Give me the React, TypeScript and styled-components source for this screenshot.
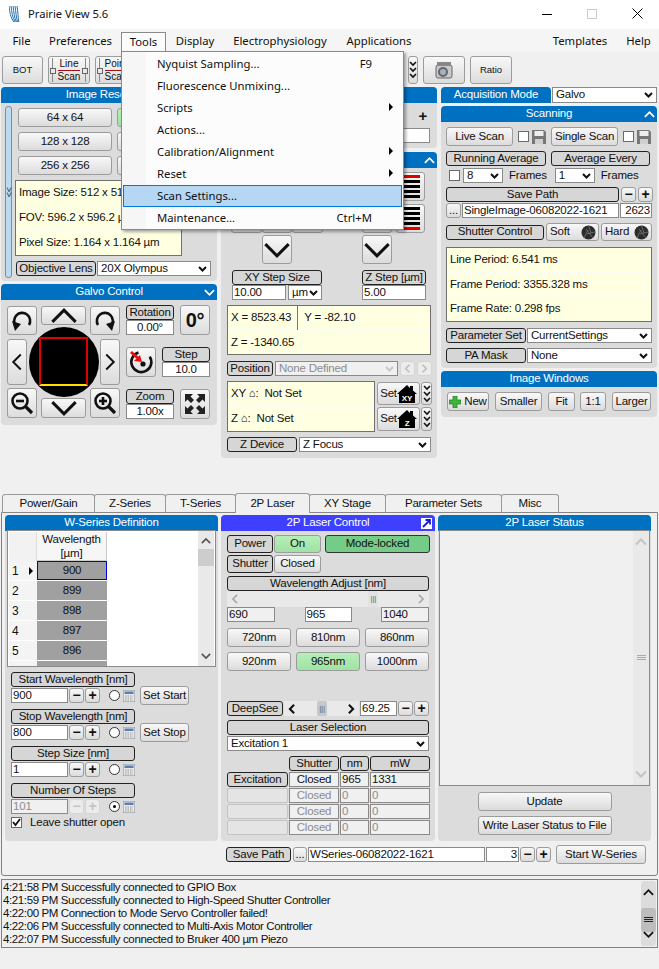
import React from "react";
import styled, { createGlobalStyle } from "styled-components";

const Global = createGlobalStyle`
  * { box-sizing: border-box; }
  html, body { margin: 0; width: 659px; height: 969px; overflow: hidden; background: #f0f0f0; }
  body { font: 11.5px/1 "Liberation Sans", Arial, sans-serif; letter-spacing:-.2px; color: #111; }
`;
const Win = styled.div`width:659px;height:969px;display:flex;flex-direction:column;`;
const TitleBar = styled.div`height:29px;background:#fff;display:flex;align-items:center;padding:0 16px 2px 9px;`;
const Title = styled.span`margin-left:8px;font:11.2px "Noto Sans",sans-serif;letter-spacing:0;`;
const WinCtrls = styled.div`margin-left:auto;display:flex;align-items:center;gap:35px;`;
const MenuBar = styled.div`height:23px;background:#f5f5f5;display:flex;align-items:center;padding-left:3px;font:11.3px "Noto Sans",sans-serif;letter-spacing:0;position:relative;z-index:5;`;
const MenuItem = styled.div<{ $w: number; $open?: boolean }>`
  width:${p => p.$w}px;height:20px;margin-top:2px;display:flex;align-items:center;justify-content:center;position:relative;padding-bottom:2px;
  ${p => p.$open ? "border:1px solid #8a8a8a;border-bottom:none;background:#fbfbfb;" : ""}
`;
const MenuGap = styled.div`flex:1;`;
const Dropdown = styled.div`
  position:absolute;left:-1px;top:18px;width:283px;height:179px;padding:1px;z-index:20;border:1px solid #8a8a8a;
  background:linear-gradient(to right,#f6f6f6 24px,#fcfcfc 24px);box-shadow:2px 2px 3px rgba(0,0,0,.35);
`;
const DropItem = styled.div<{ $on?: boolean }>`
  height:22px;display:flex;align-items:center;padding:0 10px 1px 34px;position:relative;white-space:nowrap;
  ${p => p.$on ? "background:#b5d7f3;outline:1px solid #0078d7;outline-offset:-1px;" : ""}
`;
const Shortcut = styled.span`position:absolute;right:30px;`;
const SubArrow = styled.span`position:absolute;right:9px;width:0;height:0;border-left:4px solid #000;border-top:4px solid transparent;border-bottom:4px solid transparent;`;
const ToolBar = styled.div`height:35px;display:flex;align-items:flex-start;padding:4px 2px 0;gap:5px;`;
const Btn = styled.button<{ $w?: number; $h?: number; $tone?: "green" }>`
  width:${p => p.$w ? p.$w + "px" : "auto"};height:${p => p.$h ?? 19}px;flex:none;padding:0;font:inherit;letter-spacing:inherit;color:#111;position:relative;
  border:1px solid #9c9c9c;border-radius:3px;display:flex;align-items:center;justify-content:center;white-space:nowrap;
  background:${p => p.$tone === "green" ? "linear-gradient(#b6eeb8,#9fe3a3)" : "linear-gradient(#f8f8f8,#dcdcdc)"};
`;
const ToolBtnSmall = styled.span`font-size:9.5px;letter-spacing:0;`;
const TinyStack = styled.span`
  width:34px;height:24px;display:flex;flex-direction:column;align-items:center;justify-content:center;font-size:10px;line-height:10px;text-align:center;position:relative;letter-spacing:0;
  border-left:1px solid #888;border-right:1px solid #888;
  &::before,&::after{content:"";position:absolute;top:10px;width:4px;height:4px;background:#e8e8e8;border:1px solid #666;}
  &::before{left:-3px;}&::after{right:-3px;}
`;
const ToolSpacer = styled.div`flex:none;width:261px;`;
const Main = styled.div`height:405px;display:grid;grid-template-columns:216px 216px 216px;column-gap:4px;padding-left:1px;align-items:start;`;
const Column = styled.div`display:flex;flex-direction:column;`;
const Header = styled.div<{ $bg?: string; $w?: number }>`
  height:16px;flex:none;width:${p => p.$w ? p.$w + "px" : "auto"};background:${p => p.$bg ?? "#0070c0"};color:#fff;border-radius:4px 4px 0 0;
  display:flex;align-items:center;justify-content:center;position:relative;
`;
const HeaderIcon = styled.span`position:absolute;right:2px;top:0;height:16px;display:flex;align-items:center;`;
const Body = styled.div<{ $h: number; $mb?: number }>`
  height:${p => p.$h}px;margin-bottom:${p => p.$mb ?? 3}px;background:#dcdcdc;border-radius:0 0 4px 4px;
`;
const ResBody = styled(Body)`display:flex;padding:3px 0 0 4px;`;
const Handle = styled.div`width:7px;height:172px;background:#b9dbf2;border:1px solid #8a8a8a;border-radius:3px;display:flex;align-items:center;justify-content:center;font-size:9px;margin-right:3px;writing-mode:vertical-lr;`;
const ResMain = styled.div`display:flex;flex-direction:column;`;
const ResGrid = styled.div`display:grid;grid-template-columns:94px 94px;gap:5px;margin:2px 0 5px 3px;`;
const Yellow = styled.div<{ $w?: number; $h: number; $mt?: number }>`width:${p => p.$w ? p.$w + "px" : "auto"};height:${p => p.$h}px;margin-top:${p => p.$mt ?? 0}px;flex:none;background:#ffffe1;border:1px solid #707070;display:flex;flex-direction:column;`;
const YellowRow = styled.div`flex:1;display:flex;align-items:center;padding-left:3px;border-bottom:1px solid #fbfbf4;white-space:nowrap;&:last-child{border-bottom:none;}`;
const Divider = styled.span`width:1px;height:100%;background:#777;margin:0 6px;`;
const Row = styled.div<{ $gap?: number; $mt?: number; $ml?: number }>`display:flex;align-items:center;gap:${p => p.$gap ?? 1}px;margin-top:${p => p.$mt ?? 0}px;margin-left:${p => p.$ml ?? 0}px;`;
const Tag = styled.div<{ $w?: number; $h?: number }>`
  width:${p => p.$w ? p.$w + "px" : "auto"};height:${p => p.$h ?? 15}px;flex:none;background:#d6d6d6;border:1px solid #222;border-radius:3px;
  display:flex;align-items:center;justify-content:center;white-space:nowrap;
`;
const Entry = styled.div<{ $w?: number; $h?: number; $off?: boolean; $ro?: boolean; $right?: boolean; $center?: boolean; $ml?: number }>`
  width:${p => p.$w ? p.$w + "px" : "auto"};height:${p => p.$h ?? 15}px;flex:none;border:1px solid #8a8a8a;white-space:nowrap;overflow:hidden;margin-left:${p => p.$ml ?? 0}px;
  background:${p => p.$off || p.$ro ? "#f0f0f0" : "#fff"};color:${p => p.$off ? "#8c8c8c" : "#111"};display:flex;align-items:center;padding:0 1px;
  ${p => p.$right ? "justify-content:flex-end;" : ""}${p => p.$center ? "justify-content:center;" : ""}
`;
const Combo = styled(Entry)`justify-content:space-between;padding:0 3px;`;
const Step = styled(Btn)<{ $off?: boolean; $ml?: number }>`
  width:15px;height:15px;font-weight:700;font-size:14px;line-height:13px;margin-left:${p => p.$ml ?? 0}px;color:${p => p.$off ? "#c4c4c4" : "#111"};
  ${p => p.$off ? "background:#ececec;border-color:#d5d5d5;" : ""}
`;
const GalvoBody = styled(Body)`display:flex;gap:6px;padding:5px 0 0 6px;`;
const Pad = styled.div`
  width:113px;height:112px;margin-top:1px;display:grid;grid-template-columns:20px 10px 4px 45px 4px 10px 20px;grid-template-rows:19px 10px 4px 46px 3px 10px 20px;
`;
const PadBtn = styled(Btn)<{ $c: string; $r: string }>`grid-column:${p => p.$c};grid-row:${p => p.$r};width:100%;height:100%;z-index:1;`;
const Disc = styled.div`grid-column:2/7;grid-row:2/7;place-self:center;width:70px;height:70px;border-radius:50%;background:#000;display:flex;align-items:center;justify-content:center;`;
const DiscSquare = styled.div`width:49px;height:49px;border:2px solid #e00000;border-bottom-color:#ffe000;`;
const GalvoSide = styled.div`width:84px;display:flex;flex-direction:column;gap:12px;`;
const SideRow = styled.div`display:flex;justify-content:space-between;height:30px;`;
const SideStack = styled.div`width:48px;display:flex;flex-direction:column;`;
const BigZero = styled.b`font-size:20px;`;
const MiddleTop = styled(Body)`position:relative;display:flex;flex-direction:column;align-items:flex-end;padding:5px 7px 0 0;`;
const PlainStep = styled.span`font-weight:700;font-size:15px;line-height:15px;margin:0 3px 5px 0;height:15px;`;
const StageBody = styled(Body)`padding:4px 0 0 6px;`;
const StageGrid = styled.div`display:flex;gap:39px;margin-left:4px;`;
const StageLeft = styled.div`width:92px;display:grid;grid-template-columns:31px 30px 31px;grid-template-rows:29px 29px 29px;row-gap:2.5px;`;
const StageRight = styled.div`width:63px;display:grid;grid-template-columns:30px 29px;column-gap:4px;grid-template-rows:29px 29px 29px;row-gap:2.5px;`;
const Stripes = styled.div`display:flex;flex-direction:column;gap:2px;width:19px;`;
const Stripe = styled.span<{ $red?: boolean }>`height:3px;background:${p => p.$red ? "#e00000" : "#000"};`;
const StepGrid = styled.div`display:flex;gap:40px;margin:6px 0 0 5px;`;
const StepCol = styled.div<{ $gap?: number }>`display:flex;flex-direction:column;gap:${p => p.$gap ?? 0}px;`;
const Scanning = styled(Body)`padding:5px 0 0 5px;`;
const CheckBox = styled.span`width:11px;height:11px;background:#fff;border:1px solid #6a6a6a;flex:none;display:flex;align-items:center;justify-content:center;`;
const ShutterBtn = styled(Btn)`justify-content:space-between;padding:0 2px 0 3px;`;
const ImgWin = styled(Body)`padding:5px 0 0 6px;display:flex;`;
const WinBtn = styled(Btn)<{ $ml?: number }>`margin-left:${p => p.$ml ?? 0}px;gap:3px;`;
const TabStrip = styled.div`height:21px;display:flex;align-items:flex-end;padding-left:2px;margin-bottom:-1px;position:relative;z-index:2;`;
const Tab = styled.div<{ $w: number; $on?: boolean }>`
  width:${p => p.$w}px;height:${p => p.$on ? 20 : 19}px;border:1px solid #9a9a9a;border-radius:3px 3px 0 0;margin-right:-1px;
  background:#f0f0f0;display:flex;align-items:center;justify-content:center;${p => p.$on ? "border-bottom:none;z-index:2;" : "border-bottom:1px solid #888;"}
`;
const TabPage = styled.div`height:364px;width:657px;margin-left:1px;border:1px solid #808080;border-radius:0 0 3px 3px;padding:2px 3px 0;`;
const TabCols = styled.div`display:grid;grid-template-columns:213px 214px 213px;column-gap:3px;`;
const SubBody = styled.div`height:310px;background:#dcdcdc;border-radius:0 0 4px 4px;`;
const DefBody = styled(SubBody)`padding:0 2px;`;
const Table = styled.div`height:137px;margin-top:-1px;border:1px solid #8a8a8a;background:#fff;position:relative;overflow:hidden;padding:1px;`;
const TableHeadRow = styled.div`display:flex;height:29px;`;
const TableRow = styled.div`display:flex;height:20px;`;
const Corner = styled.div`width:28px;height:29px;background:#f2f2f2;border-right:1px solid #ddd;`;
const ColHead = styled.div`width:70px;height:29px;background:#f6f6f6;border-right:1px solid #ccc;border-bottom:1px solid #ccc;display:flex;align-items:center;justify-content:center;text-align:center;line-height:14px;`;
const RowHead = styled.div`width:28px;height:19px;background:#f4f4f4;display:flex;align-items:center;padding-left:3px;position:relative;font-size:12px;`;
const RowMark = styled.span`position:absolute;right:4px;width:0;height:0;border-left:4px solid #000;border-top:4px solid transparent;border-bottom:4px solid transparent;`;
const Cell = styled.div<{ $sel?: boolean }>`width:70px;height:19px;background:#a0a0a0;display:flex;align-items:center;justify-content:center;${p => p.$sel ? "outline:1px solid #0000e0;outline-offset:-1px;" : ""}`;
const VScroll = styled.div<{ $edge?: boolean }>`position:absolute;right:${p => p.$edge ? 0 : 1}px;top:0;bottom:0;width:16px;background:#e9e9e9;display:flex;flex-direction:column;align-items:center;justify-content:space-between;padding:5px 0;`;
const Thumb = styled.div`position:absolute;top:18px;left:0;width:16px;height:17px;background:#cdcdcd;`;
const FieldGroup = styled.div`margin:5px 0 0 4px;height:32px;`;
const FieldRow = styled.div`display:flex;align-items:center;height:15px;margin-top:1px;`;
const RadioDot = styled.span<{ $on?: boolean }>`width:11px;height:11px;border-radius:50%;border:1px solid #333;background:#fff;margin-left:9px;margin-right:3px;display:flex;align-items:center;justify-content:center;&::after{content:"";width:3px;height:3px;border-radius:50%;background:${p => p.$on ? "#000" : "transparent"};}`;
const SetBtn = styled(Btn)`margin-left:5px;`;
const LeaveRow = styled.label`display:flex;align-items:center;gap:8px;margin:2px 0 0 4px;`;
const ControlBody = styled(SubBody)`padding:4px 6px 0;`;
const Greens = styled(Btn)`background:#74cc88;border-color:#333;margin-left:3px;`;
const Grid3 = styled.div`display:grid;grid-template-columns:64px 64px 64px;column-gap:5px;row-gap:5px;margin-top:6px;`;
const HScroll = styled.div<{ $w?: number; $h?: number }>`width:${p => p.$w ? p.$w + "px" : "100%"};height:${p => p.$h ?? 16}px;flex:none;background:#e9e9e9;display:flex;align-items:center;justify-content:space-between;padding:0 3px;position:relative;`;
const Grip = styled.span<{ $dark?: boolean; $l?: number }>`position:absolute;left:${p => p.$l ?? 50}%;top:0;bottom:0;width:10px;background:${p => p.$dark ? "#c8c8c8" : "#e2e2e2"};display:flex;align-items:center;justify-content:center;font-size:8px;color:#666;border-radius:2px;`;
const Range = styled.div`display:flex;justify-content:space-between;`;
const LaserGrid = styled.div`display:grid;grid-template-columns:61px 50px 29px 60px;gap:1px;margin-top:5px;`;
const Blank = styled.div`height:15px;`;
const GhostTag = styled.div`height:15px;background:#e4e4e4;border:1px solid #c4c4c4;border-radius:2px;`;
const StatusBody = styled(SubBody)`display:flex;flex-direction:column;align-items:center;padding:0 1px;gap:5px;`;
const StatusBox = styled.div`width:211px;height:256px;margin-top:-1px;background:#f0f0f0;border:1px solid #8a8a8a;position:relative;margin-bottom:1px;`;
const SaveRow = styled.div`display:flex;align-items:center;margin:4px 0 0 221px;`;
const SmallBtn = styled(Btn)`margin-left:2px;`;
const StartBtn = styled(Btn)`margin-left:5px;`;
const LogBox = styled.div`margin:3px 0 0 1px;width:657px;height:69px;border:1px solid #808080;padding:1px 0 0 1px;line-height:13px;position:relative;letter-spacing:-.38px;`;
const LogLine = styled.div`white-space:nowrap;height:13px;`;
const LogScroll = styled.div`position:absolute;right:1px;top:1px;bottom:1px;width:15px;background:#dcdcdc;border-radius:3px;display:flex;flex-direction:column;align-items:center;justify-content:space-between;padding:6px 0;`;
const LogThumb = styled.div`position:absolute;top:27px;left:0;width:15px;height:24px;background:#bdbdbd;border-radius:3px;display:flex;align-items:center;justify-content:center;`;

const Chev = ({ d, s = 28, w = 2.6, c = "#111" }: { d: "up" | "down" | "left" | "right"; s?: number; w?: number; c?: string }) => {
  const r = { up: 180, down: 0, left: 90, right: -90 }[d];
  return <svg width={s} height={s} viewBox="0 0 24 24" style={{ transform: `rotate(${r}deg)` }}><path d="M2 7 L12 17 L22 7" fill="none" stroke={c} strokeWidth={w} /></svg>;
};
const Caret = ({ c = "#111" }: { c?: string }) => <svg width="9" height="6" viewBox="0 0 9 6"><path d="M1 1 L4.5 4.5 L8 1" fill="none" stroke={c} strokeWidth="2" /></svg>;
const Rotate = ({ flip }: { flip?: boolean }) => (
  <svg width="22" height="22" viewBox="0 0 22 22" style={{ transform: flip ? "scaleX(-1)" : undefined }}>
    <path d="M5 16 A8 8 0 1 1 18 15" fill="none" stroke="#111" strokeWidth="2.6" />
    <path d="M1 11 L10 14 L4 21 Z" fill="#111" />
  </svg>
);
const Zoom = ({ plus }: { plus?: boolean }) => (
  <svg width="24" height="24" viewBox="0 0 24 24">
    <circle cx="10" cy="10" r="7.5" fill="none" stroke="#111" strokeWidth="2.6" />
    <path d="M15.5 15.5 L22 22" stroke="#111" strokeWidth="3.2" />
    <path d="M6 10 H14" stroke="#111" strokeWidth="2.6" />
    {plus && <path d="M10 6 V14" stroke="#111" strokeWidth="2.6" />}
  </svg>
);
const Expand = () => (
  <svg width="22" height="22" viewBox="0 0 22 22" fill="#222">
    <path d="M1 1 H9 L6.5 3.5 L10 7 L7 10 L3.5 6.5 L1 9 Z" />
    <path d="M21 1 H13 L15.5 3.5 L12 7 L15 10 L18.5 6.5 L21 9 Z" />
    <path d="M1 21 H9 L6.5 18.5 L10 15 L7 12 L3.5 15.5 L1 13 Z" />
    <path d="M21 21 H13 L15.5 18.5 L12 15 L15 12 L18.5 15.5 L21 13 Z" />
  </svg>
);
const Target = () => (
  <svg width="26" height="26" viewBox="0 0 26 26">
    <path d="M7 5 A10 10 0 1 0 19 5" fill="none" stroke="#111" strokeWidth="2.6" transform="rotate(20 13 14)" />
    <circle cx="15" cy="15" r="2.6" fill="#111" />
    <path d="M3 3 L12 11" stroke="#e81010" strokeWidth="3" /><path d="M14 13 L6 12 L12 6 Z" fill="#e81010" />
  </svg>
);
const Floppy = () => (
  <svg width="14" height="14" viewBox="0 0 14 14"><path d="M0 0 H12 L14 2 V14 H0 Z" fill="#777" /><rect x="2.5" y="1" width="9" height="5" fill="#eee" /><rect x="3" y="9" width="8" height="5" fill="#cfcfcf" /></svg>
);
const Shutter = () => (
  <svg width="15" height="15" viewBox="0 0 15 15"><circle cx="7.5" cy="7.5" r="7" fill="#2c2c2c" /><path d="M7.5 .5 L10 8 M14 7 L6 9 M3 13 L7 5 M12 13 L5 4" stroke="#777" strokeWidth=".8" /></svg>
);
const House = ({ label, size }: { label: string; size: number }) => (
  <svg width="20" height="18" viewBox="0 0 20 18"><path d="M0 9 L10 0 L13 3 V1 H16 V5.5 L20 9 H18 V18 H2 V9 Z" fill="#000" /><text x="10" y="16" fontSize={size} fontWeight="700" fill="#fff" textAnchor="middle" fontFamily="Liberation Sans">{label}</text></svg>
);
const Triple = () => (
  <svg width="8" height="18" viewBox="0 0 8 18">{[1, 7, 13].map(y => <path key={y} d={`M1 ${y} L4 ${y + 3} L7 ${y}`} fill="none" stroke="#111" strokeWidth="1.6" />)}</svg>
);
const Calc = () => (
  <svg width="12" height="12" viewBox="0 0 12 12"><rect width="12" height="12" fill="#e8e8e8" stroke="#7a8a9a" /><rect x="1.5" y="1.5" width="9" height="2.5" fill="#5a7fb0" /><path d="M2 6 H10 M2 8 H10 M2 10 H10" stroke="#999" strokeDasharray="1.5 1" /></svg>
);
const Logo = () => (
  <svg width="11" height="16" viewBox="0 0 11 16">{[0, 2, 4, 6, 8].map(i => <path key={i} d={`M${i} 0 C${i + 1} 6 ${i + 1} 11 ${i * 0.6 + 5} 16`} fill="none" stroke="#1f6fb2" strokeWidth="1" />)}</svg>
);
const Camera = () => (
  <svg width="20" height="18" viewBox="0 0 20 18"><rect x="2" y="4" width="16" height="13" rx="2" fill="#c9c9c9" stroke="#666" /><rect x="3" y="1" width="14" height="4" fill="#888" /><circle cx="9" cy="11" r="5" fill="#666" /><circle cx="9" cy="11" r="3" fill="#9fb4c9" /></svg>
);
const PlusGreen = () => (
  <svg width="12" height="12" viewBox="0 0 12 12"><path d="M4 0 H8 V4 H12 V8 H8 V12 H4 V8 H0 V4 H4 Z" fill="#3db53d" stroke="#1d7d1d" strokeWidth=".7" /></svg>
);
const Pop = () => (
  <svg width="13" height="13" viewBox="0 0 13 13"><rect x=".5" y=".5" width="12" height="12" fill="#fff" stroke="#3f3fff" /><path d="M3 10 L9 4 M5.5 3 H10 V7.5" fill="none" stroke="#1c1cd8" strokeWidth="1.8" /></svg>
);
const LineIcon = () => <svg width="22" height="3" viewBox="0 0 22 3"><path d="M0 1.5 H22" stroke="#a01010" /></svg>;

const menu: [string, string?, boolean?][] = [
  ["Nyquist Sampling...", "F9"], ["Fluorescence Unmixing..."], ["Scripts", undefined, true], ["Actions..."],
  ["Calibration/Alignment", undefined, true], ["Reset", undefined, true], ["Scan Settings..."], ["Maintenance...", "Ctrl+M"],
];
const fields = [
  { label: "Start Wavelength [nm]", value: "900", set: "Set Start" },
  { label: "Stop Wavelength [nm]", value: "800", set: "Set Stop" },
  { label: "Step Size [nm]", value: "1" },
  { label: "Number Of Steps", value: "101", off: true, on: true },
];
const tabs: [string, number][] = [["Power/Gain", 93], ["Z-Series", 72], ["T-Series", 71], ["2P Laser", 75], ["XY Stage", 77], ["Parameter Sets", 117], ["Misc", 58]];
const logs = [
  "4:21:58 PM Successfully connected to GPIO Box",
  "4:21:59 PM Successfully connected to High-Speed Shutter Controller",
  "4:22:00 PM Connection to Mode Servo Controller failed!",
  "4:22:06 PM Successfully connected to Multi-Axis Motor Controller",
  "4:22:07 PM Successfully connected to Bruker 400 µm Piezo",
];

export default function App() {
  return (
    <Win>
      <Global />
      <TitleBar>
        <Logo /><Title>Prairie View 5.6</Title>
        <WinCtrls>
          <svg width="10" height="10"><path d="M0 5.5 H10" stroke="#000" /></svg>
          <svg width="10" height="10"><rect x=".5" y=".5" width="9" height="9" fill="none" stroke="#ccc" /></svg>
          <svg width="11" height="11"><path d="M.5 .5 L10.5 10.5 M10.5 .5 L.5 10.5" stroke="#000" /></svg>
        </WinCtrls>
      </TitleBar>
      <MenuBar>
        <MenuItem $w={37}>File</MenuItem>
        <MenuItem $w={81}>Preferences</MenuItem>
        <MenuItem $w={45} $open>Tools
          <Dropdown>
            {menu.map(([t, s, a], i) => (
              <DropItem key={t} $on={i === 6}>{t}{s && <Shortcut>{s}</Shortcut>}{a && <SubArrow />}</DropItem>
            ))}
          </Dropdown>
        </MenuItem>
        <MenuItem $w={58}>Display</MenuItem>
        <MenuItem $w={112}>Electrophysiology</MenuItem>
        <MenuItem $w={86}>Applications</MenuItem>
        <MenuGap />
        <MenuItem $w={72}>Templates</MenuItem>
        <MenuItem $w={6} />
        <MenuItem $w={33}>Help</MenuItem>
        <MenuItem $w={4} />
      </MenuBar>
      <ToolBar>
        <Btn $w={41} $h={28}><ToolBtnSmall>BOT</ToolBtnSmall></Btn>
        <Btn $w={42} $h={28}><TinyStack>Line<LineIcon />Scan</TinyStack></Btn>
        <Btn $w={42} $h={28}><TinyStack>Point<LineIcon />Scan</TinyStack></Btn>
        <ToolSpacer />
        <Btn $w={10} $h={28}><Triple /></Btn>
        <Btn $w={42} $h={28}><Camera /></Btn>
        <Btn $w={42} $h={28}><ToolBtnSmall>Ratio</ToolBtnSmall></Btn>
      </ToolBar>
      <Main>
        <Column>
          <Header>Image Resolution</Header>
          <ResBody $h={178}>
            <Handle>&gt;&gt;</Handle>
            <ResMain>
              <ResGrid>
                <Btn>64 x 64</Btn><Btn $tone="green" />
                <Btn>128 x 128</Btn><Btn />
                <Btn>256 x 256</Btn><Btn />
              </ResGrid>
              <Yellow $w={167} $h={76}>
                <YellowRow>Image Size: 512 x 512</YellowRow>
                <YellowRow>FOV: 596.2 x 596.2 µm</YellowRow>
                <YellowRow>Pixel Size: 1.164 x 1.164 µm</YellowRow>
              </Yellow>
              <Row $mt={5} $ml={1}><Tag $w={80}>Objective Lens</Tag><Combo $w={114}>20X Olympus<Caret /></Combo></Row>
            </ResMain>
          </ResBody>
          <Header>Galvo Control<HeaderIcon><Chev d="down" s={11} w={4} c="#fff" /></HeaderIcon></Header>
          <GalvoBody $h={125}>
            <Pad>
              <PadBtn $c="1/3" $r="1/3"><Rotate /></PadBtn>
              <PadBtn $c="4" $r="1"><Chev d="up" s={28} /></PadBtn>
              <PadBtn $c="6/8" $r="1/3"><Rotate flip /></PadBtn>
              <Disc><DiscSquare /></Disc>
              <PadBtn $c="1" $r="4"><Chev d="left" s={30} /></PadBtn>
              <PadBtn $c="7" $r="4"><Chev d="right" s={30} /></PadBtn>
              <PadBtn $c="1/3" $r="6/8"><Zoom /></PadBtn>
              <PadBtn $c="4" $r="7"><Chev d="down" s={28} /></PadBtn>
              <PadBtn $c="6/8" $r="6/8"><Zoom plus /></PadBtn>
            </Pad>
            <GalvoSide>
              <SideRow>
                <SideStack><Tag>Rotation</Tag><Entry $center>0.00°</Entry></SideStack>
                <Btn $w={30} $h={30}><BigZero>0°</BigZero></Btn>
              </SideRow>
              <SideRow>
                <Btn $w={30} $h={30}><Target /></Btn>
                <SideStack><Tag>Step</Tag><Entry $center>10.0</Entry></SideStack>
              </SideRow>
              <SideRow>
                <SideStack><Tag>Zoom</Tag><Entry $center>1.00x</Entry></SideStack>
                <Btn $w={30} $h={30}><Expand /></Btn>
              </SideRow>
            </GalvoSide>
          </GalvoBody>
        </Column>
        <Column>
          <Header />
          <MiddleTop $h={45} $mb={4}><PlainStep>+</PlainStep><Entry $w={200} /></MiddleTop>
          <Header><HeaderIcon><Chev d="up" s={11} w={4} c="#fff" /></HeaderIcon></Header>
          <StageBody $h={290}>
            <StageGrid>
              <StageLeft>
                <Btn $h={29} /><Btn $h={29} /><Btn $h={29} />
                <Btn $h={29} /><Btn $h={29} /><Btn $h={29} />
                <span /><Btn $w={30} $h={29}><Chev d="down" /></Btn><span />
              </StageLeft>
              <StageRight>
                <Btn $h={29} /><Btn $h={29}><Stripes><Stripe $red /><Stripe /><Stripe /><Stripe /><Stripe /></Stripes></Btn>
                <Btn $h={29} /><Btn $h={29}><Stripes><Stripe /><Stripe /><Stripe /><Stripe /><Stripe $red /></Stripes></Btn>
                <Btn $h={29}><Chev d="down" /></Btn><span />
              </StageRight>
            </StageGrid>
            <StepGrid>
              <StepCol>
                <Tag $w={90}>XY Step Size</Tag>
                <Row $gap={2}><Entry $w={54}>10.00</Entry><Combo $w={34}>µm<Caret /></Combo></Row>
              </StepCol>
              <StepCol>
                <Tag $w={64}>Z Step [µm]</Tag>
                <Entry $w={64}>5.00</Entry>
              </StepCol>
            </StepGrid>
            <Yellow $w={204} $h={50} $mt={5}>
              <YellowRow><span>X = 8523.43</span><Divider /><span>Y = -82.10</span></YellowRow>
              <YellowRow>Z = -1340.65</YellowRow>
            </Yellow>
            <Row $mt={6} $gap={2}>
              <Tag $w={46}>Position</Tag>
              <Combo $w={123} $off>None Defined<Caret c="#c8c8c8" /></Combo>
              <Step $off><Chev d="left" s={9} w={4} c="#bbb" /></Step>
              <Step $off><Chev d="right" s={9} w={4} c="#bbb" /></Step>
            </Row>
            <Row $mt={5} $gap={2}>
              <Yellow $w={148} $h={51}>
                <YellowRow>XY ⌂:&nbsp; Not Set</YellowRow>
                <YellowRow>Z ⌂:&nbsp; Not Set</YellowRow>
              </Yellow>
              <StepCol $gap={2}>
                <Row $gap={1}><Btn $w={43} $h={23}>Set<House label="XY" size={8} /></Btn><Btn $w={11} $h={23}><Triple /></Btn></Row>
                <Row $gap={1}><Btn $w={43} $h={24}>Set<House label="Z" size={8} /></Btn><Btn $w={11} $h={24}><Triple /></Btn></Row>
              </StepCol>
            </Row>
            <Row $mt={5} $gap={2}><Tag $w={70}>Z Device</Tag><Combo $w={132}>Z Focus<Caret /></Combo></Row>
          </StageBody>
        </Column>
        <Column>
          <Row $gap={1}><Header $w={110}>Acquisition Mode</Header><Combo $w={105} $h={16}>Galvo<Caret /></Combo></Row>
          <Row $mt={3} />
          <Header>Scanning<HeaderIcon><Chev d="up" s={11} w={4} c="#fff" /></HeaderIcon></Header>
          <Scanning $h={246}>
            <Row $gap={5}>
              <Btn $w={67} $h={19}>Live Scan</Btn>
              <Row $gap={3}><CheckBox /><Floppy /></Row>
              <Btn $w={67} $h={19}>Single Scan</Btn>
              <Row $gap={3}><CheckBox /><Floppy /></Row>
            </Row>
            <Row $gap={5} $mt={5}><Tag $w={100}>Running Average</Tag><Tag $w={99}>Average Every</Tag></Row>
            <Row $mt={2} $gap={0}>
              <Row $ml={3} $gap={3}><CheckBox /><Combo $w={40}>8<Caret /></Combo>&nbsp;Frames</Row>
              <Row $ml={8} $gap={3}><Combo $w={40}>1<Caret /></Combo>&nbsp;Frames</Row>
            </Row>
            <Row $mt={4} $gap={2}><Tag $w={173}>Save Path</Tag><Step>−</Step><Step>+</Step></Row>
            <Row $mt={1} $gap={1}><Btn $w={15} $h={15}>...</Btn><Entry $w={157}>SingleImage-06082022-1621</Entry><Entry $w={32} $right>2623</Entry></Row>
            <Row $mt={5} $gap={2}>
              <Tag $w={98}>Shutter Control</Tag>
              <ShutterBtn $w={53} $h={18}>Soft<Shutter /></ShutterBtn>
              <ShutterBtn $w={51} $h={18}>Hard<Shutter /></ShutterBtn>
            </Row>
            <Yellow $w={206} $h={75} $mt={6}>
              <YellowRow>Line Period: 6.541 ms</YellowRow>
              <YellowRow>Frame Period: 3355.328 ms</YellowRow>
              <YellowRow>Frame Rate: 0.298 fps</YellowRow>
            </Yellow>
            <Row $mt={6}><Tag $w={80}>Parameter Set</Tag><Combo $w={125}>CurrentSettings<Caret /></Combo></Row>
            <Row $mt={5}><Tag $w={80}>PA Mask</Tag><Combo $w={125}>None<Caret /></Combo></Row>
          </Scanning>
          <Header>Image Windows</Header>
          <ImgWin $h={30}>
            <WinBtn $w={42}><PlusGreen />New</WinBtn>
            <WinBtn $w={47} $ml={6}>Smaller</WinBtn>
            <WinBtn $w={27} $ml={6}>Fit</WinBtn>
            <WinBtn $w={26} $ml={5}>1:1</WinBtn>
            <WinBtn $w={39} $ml={6}>Larger</WinBtn>
          </ImgWin>
        </Column>
      </Main>
      <TabStrip>
        {tabs.map(([t, w]) => <Tab key={t} $w={w} $on={t === "2P Laser"}>{t}</Tab>)}
      </TabStrip>
      <TabPage>
        <TabCols>
          <Column>
            <Header>W-Series Definition</Header>
            <DefBody>
              <Table>
                <TableHeadRow><Corner /><ColHead>Wavelength<br />[µm]</ColHead></TableHeadRow>
                {[900, 899, 898, 897, 896].map((v, i) => (
                  <TableRow key={v}><RowHead>{i + 1}{i === 0 && <RowMark />}</RowHead><Cell $sel={i === 0}>{v}</Cell></TableRow>
                ))}
                <TableRow><RowHead /><Cell /></TableRow>
                <VScroll><Chev d="up" s={10} w={4} c="#555" /><Thumb /><Chev d="down" s={10} w={4} c="#555" /></VScroll>
              </Table>
              {fields.map(f => (
                <FieldGroup key={f.label}>
                  <Tag $w={124}>{f.label}</Tag>
                  <FieldRow>
                    <Entry $w={57} $off={f.off}>{f.value}</Entry>
                    <Step $off={f.off} $ml={1}>−</Step>
                    <Step $off={f.off} $ml={1}>+</Step>
                    <RadioDot $on={f.on} /><Calc />
                    {f.set && <SetBtn $w={49}>{f.set}</SetBtn>}
                  </FieldRow>
                </FieldGroup>
              ))}
              <LeaveRow>
                <CheckBox><svg width="9" height="9" viewBox="0 0 9 9"><path d="M1 4 L3.5 7 L8 1" fill="none" stroke="#111" strokeWidth="1.8" /></svg></CheckBox>
                Leave shutter open
              </LeaveRow>
            </DefBody>
          </Column>
          <Column>
            <Header $bg="#3f3fff">2P Laser Control<HeaderIcon><Pop /></HeaderIcon></Header>
            <ControlBody>
              <Row><Tag $w={46} $h={18}>Power</Tag><Btn $w={47} $h={18} $tone="green">On</Btn><Greens $w={105} $h={18}>Mode-locked</Greens></Row>
              <Row $mt={2}><Tag $w={46} $h={18}>Shutter</Tag><Btn $w={47} $h={18}>Closed</Btn></Row>
              <Row $mt={3}><Tag $w={202}>Wavelength Adjust [nm]</Tag></Row>
              <HScroll $h={16} $w={202}><Chev d="left" s={10} w={4} c="#aaa" /><Grip $l={70}>|||</Grip><Chev d="right" s={10} w={4} c="#aaa" /></HScroll>
              <Range>
                <Entry $w={48} $ro>690</Entry><Entry $w={47}>965</Entry><Entry $w={48} $ro>1040</Entry>
              </Range>
              <Grid3>
                {["720nm", "810nm", "860nm", "920nm"].map(t => <Btn key={t}>{t}</Btn>)}
                <Btn $tone="green">965nm</Btn><Btn>1000nm</Btn>
              </Grid3>
              <Row $mt={30}>
                <Tag $w={56}>DeepSee</Tag>
                <HScroll $w={75} $h={15}><Chev d="left" s={10} w={5} /><Grip $l={44} $dark>|||</Grip><Chev d="right" s={10} w={5} /></HScroll>
                <Entry $w={37}>69.25</Entry>
                <Step>−</Step><Step>+</Step>
              </Row>
              <Row $mt={4}><Tag $w={202}>Laser Selection</Tag></Row>
              <Row $mt={1}><Combo $w={202}>Excitation 1<Caret /></Combo></Row>
              <LaserGrid>
                <Blank /><Tag>Shutter</Tag><Tag>nm</Tag><Tag>mW</Tag>
                <Tag>Excitation</Tag><Entry $center $ro>Closed</Entry><Entry $ro>965</Entry><Entry $ro>1331</Entry>
                {[0, 1, 2].map(i => (
                  <React.Fragment key={i}><GhostTag /><Entry $center $off>Closed</Entry><Entry $off>0</Entry><Entry $off>0</Entry></React.Fragment>
                ))}
              </LaserGrid>
            </ControlBody>
          </Column>
          <Column>
            <Header>2P Laser Status</Header>
            <StatusBody>
              <StatusBox>
                <VScroll $edge>
                  <Chev d="up" s={12} w={4} c="#c4c4c4" />
                  <svg width="9" height="6"><path d="M0 .5 H9 M0 2.5 H9 M0 4.5 H9" stroke="#aaa" /></svg>
                  <Chev d="down" s={12} w={4} c="#c4c4c4" />
                </VScroll>
              </StatusBox>
              <Btn $w={134}>Update</Btn>
              <Btn $w={134}>Write Laser Status to File</Btn>
            </StatusBody>
          </Column>
        </TabCols>
        <SaveRow>
          <Tag $w={65} $h={15}>Save Path</Tag>
          <SmallBtn $w={14} $h={15}>...</SmallBtn>
          <Entry $w={177} $ml={1}>WSeries-06082022-1621</Entry>
          <Entry $w={33} $right $ml={1}>3</Entry>
          <Step $ml={1}>−</Step>
          <Step $ml={1}>+</Step>
          <StartBtn $w={90}>Start W-Series</StartBtn>
        </SaveRow>
      </TabPage>
      <LogBox>
        {logs.map(l => <LogLine key={l}>{l}</LogLine>)}
        <LogScroll>
          <Chev d="up" s={11} w={4} />
          <LogThumb><svg width="9" height="6"><path d="M0 .5 H9 M0 2.5 H9 M0 4.5 H9" stroke="#222" /></svg></LogThumb>
          <Chev d="down" s={11} w={4} />
        </LogScroll>
      </LogBox>
    </Win>
  );
}
